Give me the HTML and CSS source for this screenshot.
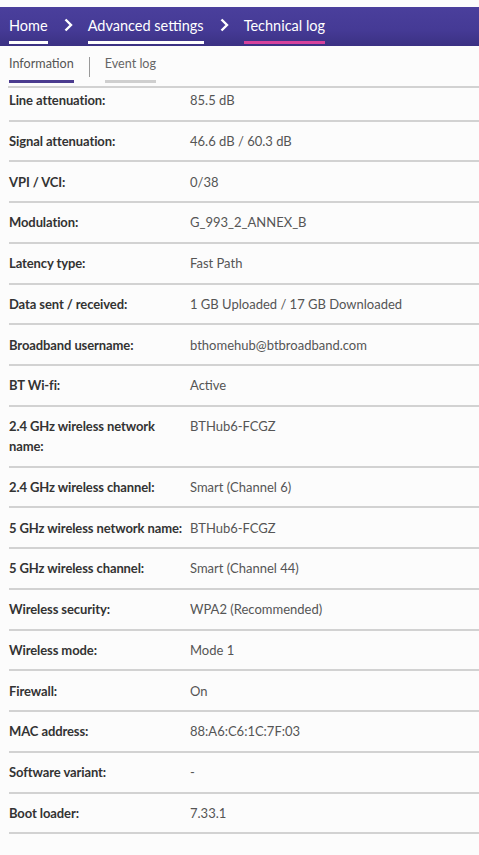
FILE: index.html
```html
<!DOCTYPE html>
<html>
<head>
<meta charset="utf-8">
<link rel="stylesheet" href="styles.css">
</head>
<body>
<header class="topbar">
  <nav class="crumbs">
    <a class="crumb">Home</a>
    <span class="chev"><svg width="9" height="14" viewBox="0 0 9 14"><path d="M1.5 1.5 L7 7 L1.5 12.5" fill="none" stroke="#fff" stroke-width="2.4"/></svg></span>
    <a class="crumb">Advanced settings</a>
    <span class="chev"><svg width="9" height="14" viewBox="0 0 9 14"><path d="M1.5 1.5 L7 7 L1.5 12.5" fill="none" stroke="#fff" stroke-width="2.4"/></svg></span>
    <a class="crumb current">Technical log</a>
  </nav>
</header>
<div class="tabs">
  <span class="tab active">Information</span>
  <span class="tab-sep"></span>
  <span class="tab">Event log</span>
</div>
<div class="list">
  <div class="row first"><div class="label">Line attenuation:</div><div class="value">85.5 dB</div></div>
  <div class="row"><div class="label">Signal attenuation:</div><div class="value">46.6 dB / 60.3 dB</div></div>
  <div class="row"><div class="label">VPI / VCI:</div><div class="value">0/38</div></div>
  <div class="row"><div class="label">Modulation:</div><div class="value">G_993_2_ANNEX_B</div></div>
  <div class="row"><div class="label">Latency type:</div><div class="value">Fast Path</div></div>
  <div class="row"><div class="label">Data sent / received:</div><div class="value">1 GB Uploaded / 17 GB Downloaded</div></div>
  <div class="row"><div class="label">Broadband username:</div><div class="value">bthomehub@btbroadband.com</div></div>
  <div class="row"><div class="label">BT Wi-fi:</div><div class="value">Active</div></div>
  <div class="row"><div class="label">2.4 GHz wireless network name:</div><div class="value">BTHub6-FCGZ</div></div>
  <div class="row"><div class="label">2.4 GHz wireless channel:</div><div class="value">Smart (Channel 6)</div></div>
  <div class="row"><div class="label">5 GHz wireless network name:</div><div class="value">BTHub6-FCGZ</div></div>
  <div class="row"><div class="label">5 GHz wireless channel:</div><div class="value">Smart (Channel 44)</div></div>
  <div class="row"><div class="label">Wireless security:</div><div class="value">WPA2 (Recommended)</div></div>
  <div class="row"><div class="label">Wireless mode:</div><div class="value">Mode 1</div></div>
  <div class="row"><div class="label">Firewall:</div><div class="value">On</div></div>
  <div class="row"><div class="label">MAC address:</div><div class="value">88:A6:C6:1C:7F:03</div></div>
  <div class="row"><div class="label">Software variant:</div><div class="value">-</div></div>
  <div class="row"><div class="label">Boot loader:</div><div class="value">7.33.1</div></div>
</div>
</body>
</html>
```

FILE: styles.css
```css
html, body {
  margin: 0;
  padding: 0;
  background: #fcfcfc;
  font-family: "Lato", "Open Sans", sans-serif;
}
.topbar {
  margin-top: 7px;
  height: 39px;
  background: linear-gradient(#4a3f9c, #453a95 60%, #3b3183);
  padding-left: 9px;
}
.crumbs {
  display: flex;
  align-items: flex-start;
  height: 100%;
}
.crumb {
  color: #fff;
  font-size: 14.5px;
  line-height: 20px;
  padding-top: 9px;
  height: 37px;
  box-sizing: border-box;
  border-bottom: 3px solid #fff;
}
.crumb.current { border-bottom-color: #d6429c; }
.chev {
  display: flex;
  align-items: center;
  height: 28px;
  padding-top: 4px;
  margin: 0 15px 0 16px;
}
.tabs {
  display: flex;
  align-items: flex-start;
  height: 42px;
  box-sizing: border-box;
  margin-left: 8px;
  padding-left: 1px;
  border-bottom: 2px solid #d2d2d2;
}
.tab {
  font-size: 12.6px;
  color: #666;
  line-height: 18px;
  padding-top: 9px;
  height: 37px;
  box-sizing: border-box;
  border-bottom: 3px solid #cfcfcf;
}
.tab.active {
  color: #555;
  border-bottom-color: #4b3b8f;
}
.tab-sep {
  width: 1px;
  height: 20px;
  margin: 11px 15px 0 15px;
  background: #999;
}
.list {
  margin-left: 9px;
}
.row {
  display: grid;
  grid-template-columns: 181px 1fr;
  border-bottom: 2px solid #d2d2d2;
  padding: 9.4px 0 9.36px;
  font-size: 13px;
  line-height: 20px;
}
.row.first {
  padding-top: 2.2px;
}
.label {
  font-weight: bold;
  color: #333;
  padding-right: 1px;
  letter-spacing: -0.1px;
}
.value {
  color: #555;
}
```
